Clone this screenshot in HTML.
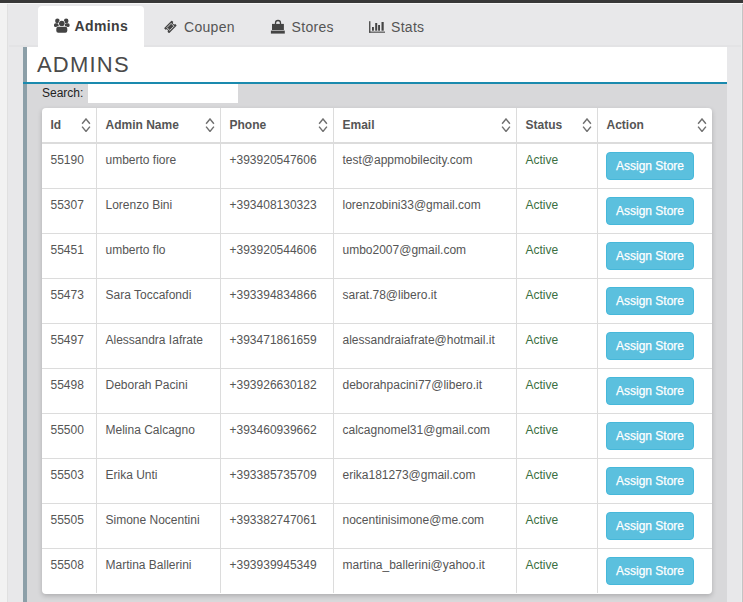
<!DOCTYPE html>
<html><head><meta charset="utf-8">
<style>
*{box-sizing:border-box;margin:0;padding:0}
html,body{width:743px;height:602px;overflow:hidden;background:#e8e8ea;font-family:"Liberation Sans",sans-serif;position:relative}
.abs{position:absolute}
#topbar{left:0;top:0;width:743px;height:3px;background:#383838}
#lightstrip{left:0;top:3px;width:743px;height:1px;background:#f6f6f6}
#leftstrip{left:0;top:4px;width:8px;height:598px;background:#f2f2f2;border-right:1px solid #e0e0e0}
#rightline{left:741px;top:4px;width:2px;height:598px;background:#c4c4c4;border-left:1px solid #ececed}
.tab{top:6px;height:41px;font-size:14px;color:#555}
.tab.active{background:#fff;border-radius:4px 4px 0 0;color:#444;font-weight:bold}
.tabtxt{font-size:14px;color:#555;white-space:nowrap;letter-spacing:0.3px}
.tabtxt.b{font-weight:bold;color:#3d3d3d;letter-spacing:0.4px}
#panel{left:23px;top:47px;width:704px;height:555px;background:#d8d8da;border-left:4px solid #8c9fa8}
#phead{left:0;top:0;width:700px;height:35px;background:#fff}
#pline{left:-4px;top:35px;width:704px;height:2px;background:#1a8aae}
#ptitle{left:10px;top:5px;font-size:22px;color:#4a4a4a;letter-spacing:1.2px}
#slabel{left:15px;top:39px;font-size:12px;color:#222}
#sinput{left:61px;top:37px;width:150px;height:19px;background:#fff}
#table{left:42px;top:108px;width:670px;height:486px;background:#fff;border-radius:4px;box-shadow:0 2px 5px rgba(0,0,0,.2);overflow:hidden}
.row{position:absolute;left:0;width:670px;display:flex}
.row .c{position:relative;height:100%;border-left:1px solid #dcdcdc;padding-left:8.5px}
.row .c:first-child{border-left:none}
.hrow{top:0;height:36px;border-bottom:2px solid #dcdcdc}
.hrow .c{font-weight:bold;font-size:12px;color:#555;padding-top:10px}
.brow{height:45px;border-top:1px solid #dcdcdc;font-size:12px;color:#555}
.brow .c{padding-top:9px}
.c1{width:54px}.c2{width:124px}.c3{width:113px}.c4{width:183px}.c5{width:81px}.c6{width:115px}
.sort{position:absolute;right:5.4px;top:10px;width:10px;height:14px}
.active-s{color:#3b6f3f}
.btn{position:absolute;left:8px;top:8px;-webkit-text-stroke:0.25px #fff;width:88px;height:28px;background:#5bc0de;border:1px solid #46b8da;border-radius:4px;color:#fff;font-size:12px;text-align:center;line-height:26px}
</style></head><body>
<div class="abs" id="topbar"></div>
<div class="abs" id="lightstrip"></div>
<div class="abs" id="leftstrip"></div>
<div class="abs" id="rightline"></div>

<div class="abs" style="left:9px;top:45px;width:732px;height:2px;background:#e3e3e5"></div>
<div class="abs tab active" style="left:38px;width:106px"></div>
<div class="abs tab" style="left:144px;width:106px"></div>
<div class="abs tabtxt b" style="left:74.5px;top:18px">Admins</div>
<div class="abs tabtxt" style="left:184px;top:19px">Coupen</div>
<div class="abs tabtxt" style="left:291.6px;top:19px">Stores</div>
<div class="abs tabtxt" style="left:391px;top:19px">Stats</div>
<svg class="abs" style="left:0;top:0" width="743" height="50" viewBox="0 0 743 50">
 <g fill="#444">
  <circle cx="57.4" cy="20.9" r="2.3"/><circle cx="66.2" cy="20.9" r="2.3"/>
  <rect x="54" y="23.2" width="4.8" height="3.9" rx="1.6"/><rect x="64.8" y="23.2" width="4.8" height="3.9" rx="1.6"/>
  <circle cx="61.8" cy="23.5" r="3.3" fill="#fff"/>
  <circle cx="61.8" cy="23.5" r="2.8"/>
  <rect x="55.8" y="26.3" width="12" height="7" rx="2.3" fill="#fff"/>
  <rect x="56.3" y="26.8" width="11" height="6" rx="2"/>
 </g>
 <g transform="rotate(-45 170.4 26.9)">
  <rect x="164.9" y="23.3" width="11" height="7.2" rx="0.8" fill="#444"/>
  <circle cx="164.9" cy="26.9" r="1.4" fill="#e9e9ea"/><circle cx="175.9" cy="26.9" r="1.4" fill="#e9e9ea"/>
  <rect x="167.4" y="24.9" width="6" height="4" fill="none" stroke="#e9e9ea" stroke-width="0.8"/>
 </g>
 <g fill="#444">
  <path d="M275.5 24.5V23a2.5 2.5 0 0 1 5 0v1.5" fill="none" stroke="#444" stroke-width="1.3"/>
  <path d="M272 23.9h11.9v6.1H272z"/>
  <path d="M270.9 30.6h13.9v3H270.9z"/>
 </g>
 <g fill="#444">
  <rect x="369.1" y="21.2" width="1.3" height="11.5"/>
  <rect x="369.1" y="31.6" width="15.9" height="1.1"/>
  <rect x="372" y="27" width="1.9" height="3.7"/>
  <rect x="375.2" y="23" width="2" height="7.7"/>
  <rect x="378.1" y="25" width="1.9" height="5.7"/>
  <rect x="381.5" y="22" width="2.2" height="8.7"/>
 </g>
</svg>

<div class="abs" id="panel">
  <div class="abs" id="phead"><div class="abs" id="ptitle">ADMINS</div></div>
  <div class="abs" id="pline"></div>
  <div class="abs" id="slabel">Search:</div>
  <div class="abs" id="sinput"></div>
</div>

<div class="abs" id="table">
 <div class="row hrow">
  <div class="c c1">Id<svg class="sort" viewBox="0 0 10 14"><path d="M1.1 5.8L5 1L8.9 5.8M1.1 8.6L5 13.4L8.9 8.6" stroke="#707070" stroke-width="1.45" fill="none"/></svg></div>
  <div class="c c2">Admin Name<svg class="sort" viewBox="0 0 10 14"><path d="M1.1 5.8L5 1L8.9 5.8M1.1 8.6L5 13.4L8.9 8.6" stroke="#707070" stroke-width="1.45" fill="none"/></svg></div>
  <div class="c c3">Phone<svg class="sort" viewBox="0 0 10 14"><path d="M1.1 5.8L5 1L8.9 5.8M1.1 8.6L5 13.4L8.9 8.6" stroke="#707070" stroke-width="1.45" fill="none"/></svg></div>
  <div class="c c4">Email<svg class="sort" viewBox="0 0 10 14"><path d="M1.1 5.8L5 1L8.9 5.8M1.1 8.6L5 13.4L8.9 8.6" stroke="#707070" stroke-width="1.45" fill="none"/></svg></div>
  <div class="c c5">Status<svg class="sort" viewBox="0 0 10 14"><path d="M1.1 5.8L5 1L8.9 5.8M1.1 8.6L5 13.4L8.9 8.6" stroke="#707070" stroke-width="1.45" fill="none"/></svg></div>
  <div class="c c6">Action<svg class="sort" viewBox="0 0 10 14"><path d="M1.1 5.8L5 1L8.9 5.8M1.1 8.6L5 13.4L8.9 8.6" stroke="#707070" stroke-width="1.45" fill="none"/></svg></div>
 </div>
 <div class="row brow" style="top:36px;height:44px;border-top:none"><div class="c c1">55190</div><div class="c c2">umberto fiore</div><div class="c c3">+393920547606</div><div class="c c4">test@appmobilecity.com</div><div class="c c5 active-s">Active</div><div class="c c6"><div class="btn">Assign Store</div></div></div>
 <div class="row brow" style="top:80px"><div class="c c1">55307</div><div class="c c2">Lorenzo Bini</div><div class="c c3">+393408130323</div><div class="c c4">lorenzobini33@gmail.com</div><div class="c c5 active-s">Active</div><div class="c c6"><div class="btn">Assign Store</div></div></div>
 <div class="row brow" style="top:125px"><div class="c c1">55451</div><div class="c c2">umberto flo</div><div class="c c3">+393920544606</div><div class="c c4">umbo2007@gmail.com</div><div class="c c5 active-s">Active</div><div class="c c6"><div class="btn">Assign Store</div></div></div>
 <div class="row brow" style="top:170px"><div class="c c1">55473</div><div class="c c2">Sara Toccafondi</div><div class="c c3">+393394834866</div><div class="c c4">sarat.78@libero.it</div><div class="c c5 active-s">Active</div><div class="c c6"><div class="btn">Assign Store</div></div></div>
 <div class="row brow" style="top:215px"><div class="c c1">55497</div><div class="c c2">Alessandra Iafrate</div><div class="c c3">+393471861659</div><div class="c c4">alessandraiafrate@hotmail.it</div><div class="c c5 active-s">Active</div><div class="c c6"><div class="btn">Assign Store</div></div></div>
 <div class="row brow" style="top:260px"><div class="c c1">55498</div><div class="c c2">Deborah Pacini</div><div class="c c3">+393926630182</div><div class="c c4">deborahpacini77@libero.it</div><div class="c c5 active-s">Active</div><div class="c c6"><div class="btn">Assign Store</div></div></div>
 <div class="row brow" style="top:305px"><div class="c c1">55500</div><div class="c c2">Melina Calcagno</div><div class="c c3">+393460939662</div><div class="c c4">calcagnomel31@gmail.com</div><div class="c c5 active-s">Active</div><div class="c c6"><div class="btn">Assign Store</div></div></div>
 <div class="row brow" style="top:350px"><div class="c c1">55503</div><div class="c c2">Erika Unti</div><div class="c c3">+393385735709</div><div class="c c4">erika181273@gmail.com</div><div class="c c5 active-s">Active</div><div class="c c6"><div class="btn">Assign Store</div></div></div>
 <div class="row brow" style="top:395px"><div class="c c1">55505</div><div class="c c2">Simone Nocentini</div><div class="c c3">+393382747061</div><div class="c c4">nocentinisimone@me.com</div><div class="c c5 active-s">Active</div><div class="c c6"><div class="btn">Assign Store</div></div></div>
 <div class="row brow" style="top:440px"><div class="c c1">55508</div><div class="c c2">Martina Ballerini</div><div class="c c3">+393939945349</div><div class="c c4">martina_ballerini@yahoo.it</div><div class="c c5 active-s">Active</div><div class="c c6"><div class="btn">Assign Store</div></div></div>
</div>
</body></html>
